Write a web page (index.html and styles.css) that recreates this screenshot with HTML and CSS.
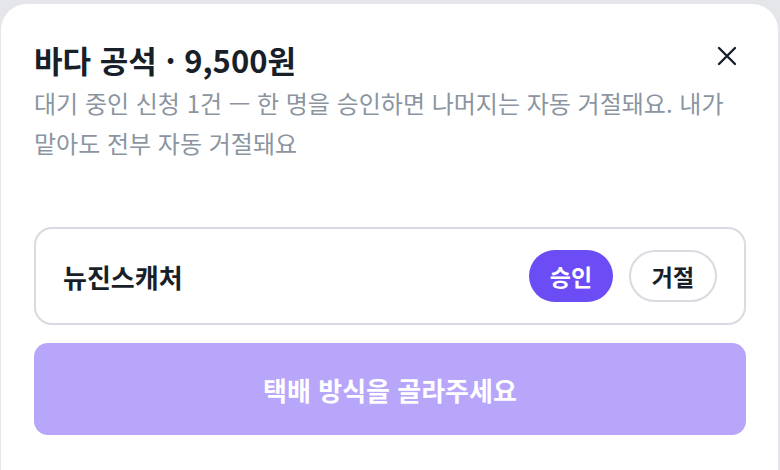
FILE: index.html
```html
<!DOCTYPE html>
<html lang="ko">
<head>
    <meta charset="UTF-8">
    <meta name="viewport" content="width=device-width, initial-scale=1.0">
    <title>신청 승인</title>
    <link rel="stylesheet" href="styles.css">
</head>
<body>
    <div class="sheet">
        <!-- Header -->
        <div class="sheet-header">
            <h2 class="sheet-title">바다 공석 · 9,500원</h2>
            <button class="close-btn" aria-label="닫기">
                <svg width="22" height="22" viewBox="0 0 22 22" fill="none" stroke="#191f28" stroke-width="2.4" stroke-linecap="round">
                    <path d="M3 3 L19 19 M19 3 L3 19"/>
                </svg>
            </button>
        </div>
        <p class="sheet-desc">대기 중인 신청 1건 — 한 명을 승인하면 나머지는 자동 거절돼요. 내가 맡아도 전부 자동 거절돼요</p>

        <!-- Applicant -->
        <div class="applicant">
            <div class="applicant-name">뉴진스캐처</div>
            <div class="applicant-actions">
                <button class="pill pill-approve">승인</button>
                <button class="pill pill-reject">거절</button>
            </div>
        </div>

        <button class="submit-btn" disabled>택배 방식을 골라주세요</button>
    </div>
</body>
</html>
```

FILE: styles.css
```css
body {
    margin: 0;
    background-color: #e4e6ea;
    font-family: "Noto Sans CJK KR", "Noto Sans", sans-serif;
}
.sheet {
    margin: 4px 2px 0 1px;
    min-height: 466px;
    box-sizing: border-box;
    background-color: white;
    border-radius: 26px 26px 0 0;
    padding: 36px 32px 0 33px;
}
.sheet-header {
    display: flex;
    justify-content: space-between;
    align-items: flex-start;
}
.sheet-title {
    margin: 0;
    font-size: 31px;
    line-height: 40px;
    font-weight: 700;
    color: #191f28;
}
.close-btn {
    background: none;
    border: none;
    padding: 0;
    margin: 5px 8px 0 0;
    width: 22px;
    height: 22px;
    cursor: pointer;
}
.sheet-desc {
    margin: 3px 0 0;
    font-size: 24px;
    line-height: 40px;
    color: #8b95a1;
    word-break: keep-all;
}
.applicant {
    margin-top: 64px;
    height: 98px;
    box-sizing: border-box;
    border: 2px solid #d8dbdf;
    border-radius: 18px;
    padding: 0 27px 0 27px;
    display: flex;
    align-items: center;
    justify-content: space-between;
}
.applicant-name {
    font-size: 26px;
    font-weight: 700;
    color: #191f28;
}
.applicant-actions {
    display: flex;
    gap: 16px;
}
.pill {
    height: 52px;
    border-radius: 26px;
    font-family: inherit;
    font-size: 23px;
    font-weight: 700;
    cursor: pointer;
    box-sizing: border-box;
}
.pill-approve {
    width: 84px;
    background-color: #6c4cf5;
    color: white;
    border: none;
}
.pill-reject {
    width: 88px;
    background-color: white;
    color: #191f28;
    border: 2px solid #d8dbdf;
}
.submit-btn {
    display: block;
    width: 100%;
    height: 92px;
    margin-top: 18px;
    border: none;
    border-radius: 14px;
    background-color: #b8a6fb;
    color: white;
    font-family: inherit;
    font-size: 26px;
    font-weight: 700;
}
```
